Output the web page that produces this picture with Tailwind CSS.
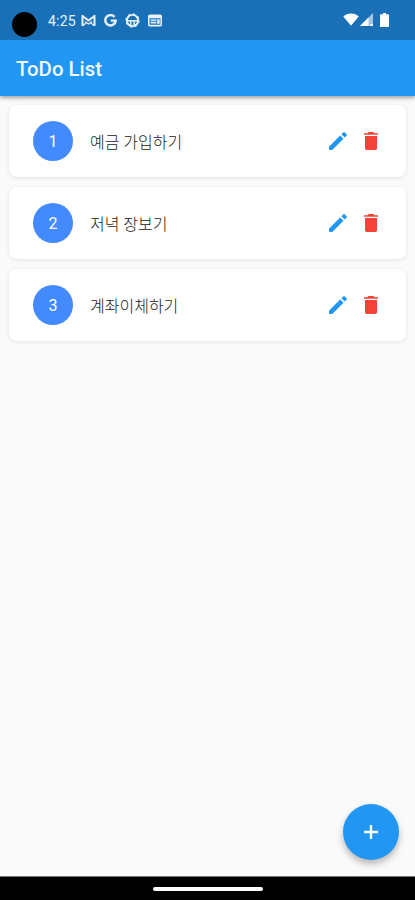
<!DOCTYPE html>
<html lang="ko">
<head>
<meta charset="utf-8">
<meta name="viewport" content="width=device-width, initial-scale=1">
<title>ToDo List</title>
<script src="https://cdn.jsdelivr.net/npm/@tailwindcss/browser@4"></script>
</head>
<body class="h-[900px] w-[415px] overflow-hidden bg-[#fafafa] font-[Roboto,'Noto_Sans_CJK_KR',sans-serif]">
<svg class="hidden">
  <symbol id="edit" viewBox="0 0 24 24"><path d="M3 18.200v1.900c0 .5.400.9.900.9h1.900c.4 0 .7-.15 1-.45L17.500 9.850l-3.350-3.350L3.450 17.200c-.3.300-.45.600-.45 1zM20.600 6.750a1.200 1.200 0 0 0 0-1.600l-1.750-1.750a1.200 1.200 0 0 0-1.600 0L15.400 5.250l3.350 3.350z"/></symbol>
  <symbol id="delete" viewBox="0 0 24 24"><path d="M6 19.300c0 1 .8 1.700 1.700 1.700h8.600c.9 0 1.700-.7 1.700-1.700V7H6v12.300zM19 4.200h-3.500l-1-1.200h-5l-1 1.200H5v1.600h14V4.200z"/></symbol>
</svg>
<div class="relative flex h-full flex-col">
  <header class="relative z-10 shrink-0 bg-[#2196f3] shadow-[0_2px_4px_rgba(0,0,0,0.35)]">
    <div class="flex h-[39.5px] items-center bg-[#1a70b7] pr-[26.5px] pl-3 text-[#e8f2ff]">
      <span class="mt-[9px] size-[25px] rounded-full bg-black"></span>
      <span class="ml-[11px] w-[28px] pt-[3px] text-[14px] leading-4 tracking-[0.2px] whitespace-nowrap">4:25</span>
      <svg class="mt-px ml-[5px] h-[13px] w-[15px]" viewBox="0 0 15 13" fill="none" stroke="currentColor"><path stroke-width="2" d="M1.500 1v11M13.500 1v11M1.500 2l6 4.500 6-4.500"/><path stroke-width="1.200" d="M2 11.500l3.500-2.800M13 11.500L9.500 8.700M4 7.500l3.500 2.500L11 7.500"/></svg>
      <svg class="mt-px ml-[8px] size-[13px]" viewBox="0 0 13 13" fill="none" stroke="currentColor" stroke-width="2.400"><path d="M10.500 2.900A5.200 5.200 0 1 0 11.700 6.600H6.800"/></svg>
      <svg class="mt-px ml-[8px] size-[15px]" viewBox="0 0 15 15" fill="none" stroke="currentColor"><circle cx="7.500" cy="7.500" r="5.600" stroke-width="1.900"/><circle cx="7.500" cy="7.500" r="6.700" stroke-width="1" stroke-dasharray="2.600 2.660"/><path stroke-width="1.500" d="M2.500 7.700h10M5.800 8v4.500M9.200 8v4.500"/></svg>
      <svg class="mt-[2px] ml-[8px] h-[13px] w-[14px]" viewBox="0 0 14 13"><rect x=".7" y="1.200" width="12.600" height="10.600" rx="1.200" fill="currentColor" fill-opacity=".25" stroke="currentColor" stroke-width="1.400"/><path fill="currentColor" d="M1 1h12v3H1zM3 5.500h5v1.300H3zM3 8h5v1.300H3zM9.300 5.500H11.500v4.300H9.300z"/></svg>
      <div class="ml-auto flex items-center text-white">
        <svg class="h-[13px] w-[16px]" viewBox="0 0 16 13" fill="currentColor"><path d="M8 12.800L.3 3.600C2.300 1.500 5 .5 8 .5s5.700 1 7.700 3.100z"/></svg>
        <svg class="ml-[1px] size-[13px]" viewBox="0 0 13 13" fill="currentColor"><path fill-opacity=".6" d="M0 13L13 0v13z"/><path d="M0 13l8.500-8.500V13zM10.500 11h2.500v2h-2.500z"/></svg>
        <svg class="ml-[7px] h-[14px] w-[9px]" viewBox="0 0 9 14" fill="currentColor"><path d="M3 0h3v1.300h2.200a.8.8 0 0 1 .8.800v11.100a.8.8 0 0 1-.8.800H.8a.8.8 0 0 1-.8-.8V2.100a.8.8 0 0 1 .8-.8H3z"/></svg>
      </div>
    </div>
    <h1 class="flex h-[56px] items-center pl-4 pt-[3px] text-[20.4px] font-medium text-[#f2f8ff]">ToDo List</h1>
  </header>

  <main class="flex grow flex-col gap-[10px] px-[9px] pt-[9.5px]">
    <div class="flex h-[72px] items-center rounded-[8px] bg-white pr-[23px] pl-[24px] shadow-[0_1px_4px_rgba(0,0,0,0.1)]">
      <span class="flex size-10 items-center justify-center rounded-full bg-[#448aff] pt-px text-[16px] text-white">1</span>
      <span class="ml-[17px] pt-[4px] text-[16px] font-light text-[#202020]">예금 가입하기</span>
      <svg class="ml-auto size-6 fill-[#2196f3]"><use href="#edit"/></svg>
      <svg class="ml-[9px] size-6 fill-[#f44336]"><use href="#delete"/></svg>
    </div>
    <div class="flex h-[72px] items-center rounded-[8px] bg-white pr-[23px] pl-[24px] shadow-[0_1px_4px_rgba(0,0,0,0.1)]">
      <span class="flex size-10 items-center justify-center rounded-full bg-[#448aff] pt-px text-[16px] text-white">2</span>
      <span class="ml-[17px] pt-[4px] text-[16px] font-light text-[#202020]">저녁 장보기</span>
      <svg class="ml-auto size-6 fill-[#2196f3]"><use href="#edit"/></svg>
      <svg class="ml-[9px] size-6 fill-[#f44336]"><use href="#delete"/></svg>
    </div>
    <div class="flex h-[72px] items-center rounded-[8px] bg-white pr-[23px] pl-[24px] shadow-[0_1px_4px_rgba(0,0,0,0.1)]">
      <span class="flex size-10 items-center justify-center rounded-full bg-[#448aff] pt-px text-[16px] text-white">3</span>
      <span class="ml-[17px] pt-[4px] text-[16px] font-light text-[#202020]">계좌이체하기</span>
      <svg class="ml-auto size-6 fill-[#2196f3]"><use href="#edit"/></svg>
      <svg class="ml-[9px] size-6 fill-[#f44336]"><use href="#delete"/></svg>
    </div>
  </main>

  <button aria-label="추가" class="absolute right-4 bottom-[40px] flex size-14 items-center justify-center rounded-full bg-[#2196f3] shadow-[0_4px_7px_rgba(0,0,0,0.28)]">
    <svg class="size-6 fill-white" viewBox="0 0 24 24"><path d="M19 13.200h-5.800V19h-2.400v-5.800H5v-2.400h5.800V5h2.400v5.800H19z"/></svg>
  </button>

  <footer class="flex h-[24px] shrink-0 items-center justify-center border-t border-[#777] bg-black">
    <span class="h-[4px] w-[110px] rounded-full bg-white"></span>
  </footer>
</div>
</body>
</html>
